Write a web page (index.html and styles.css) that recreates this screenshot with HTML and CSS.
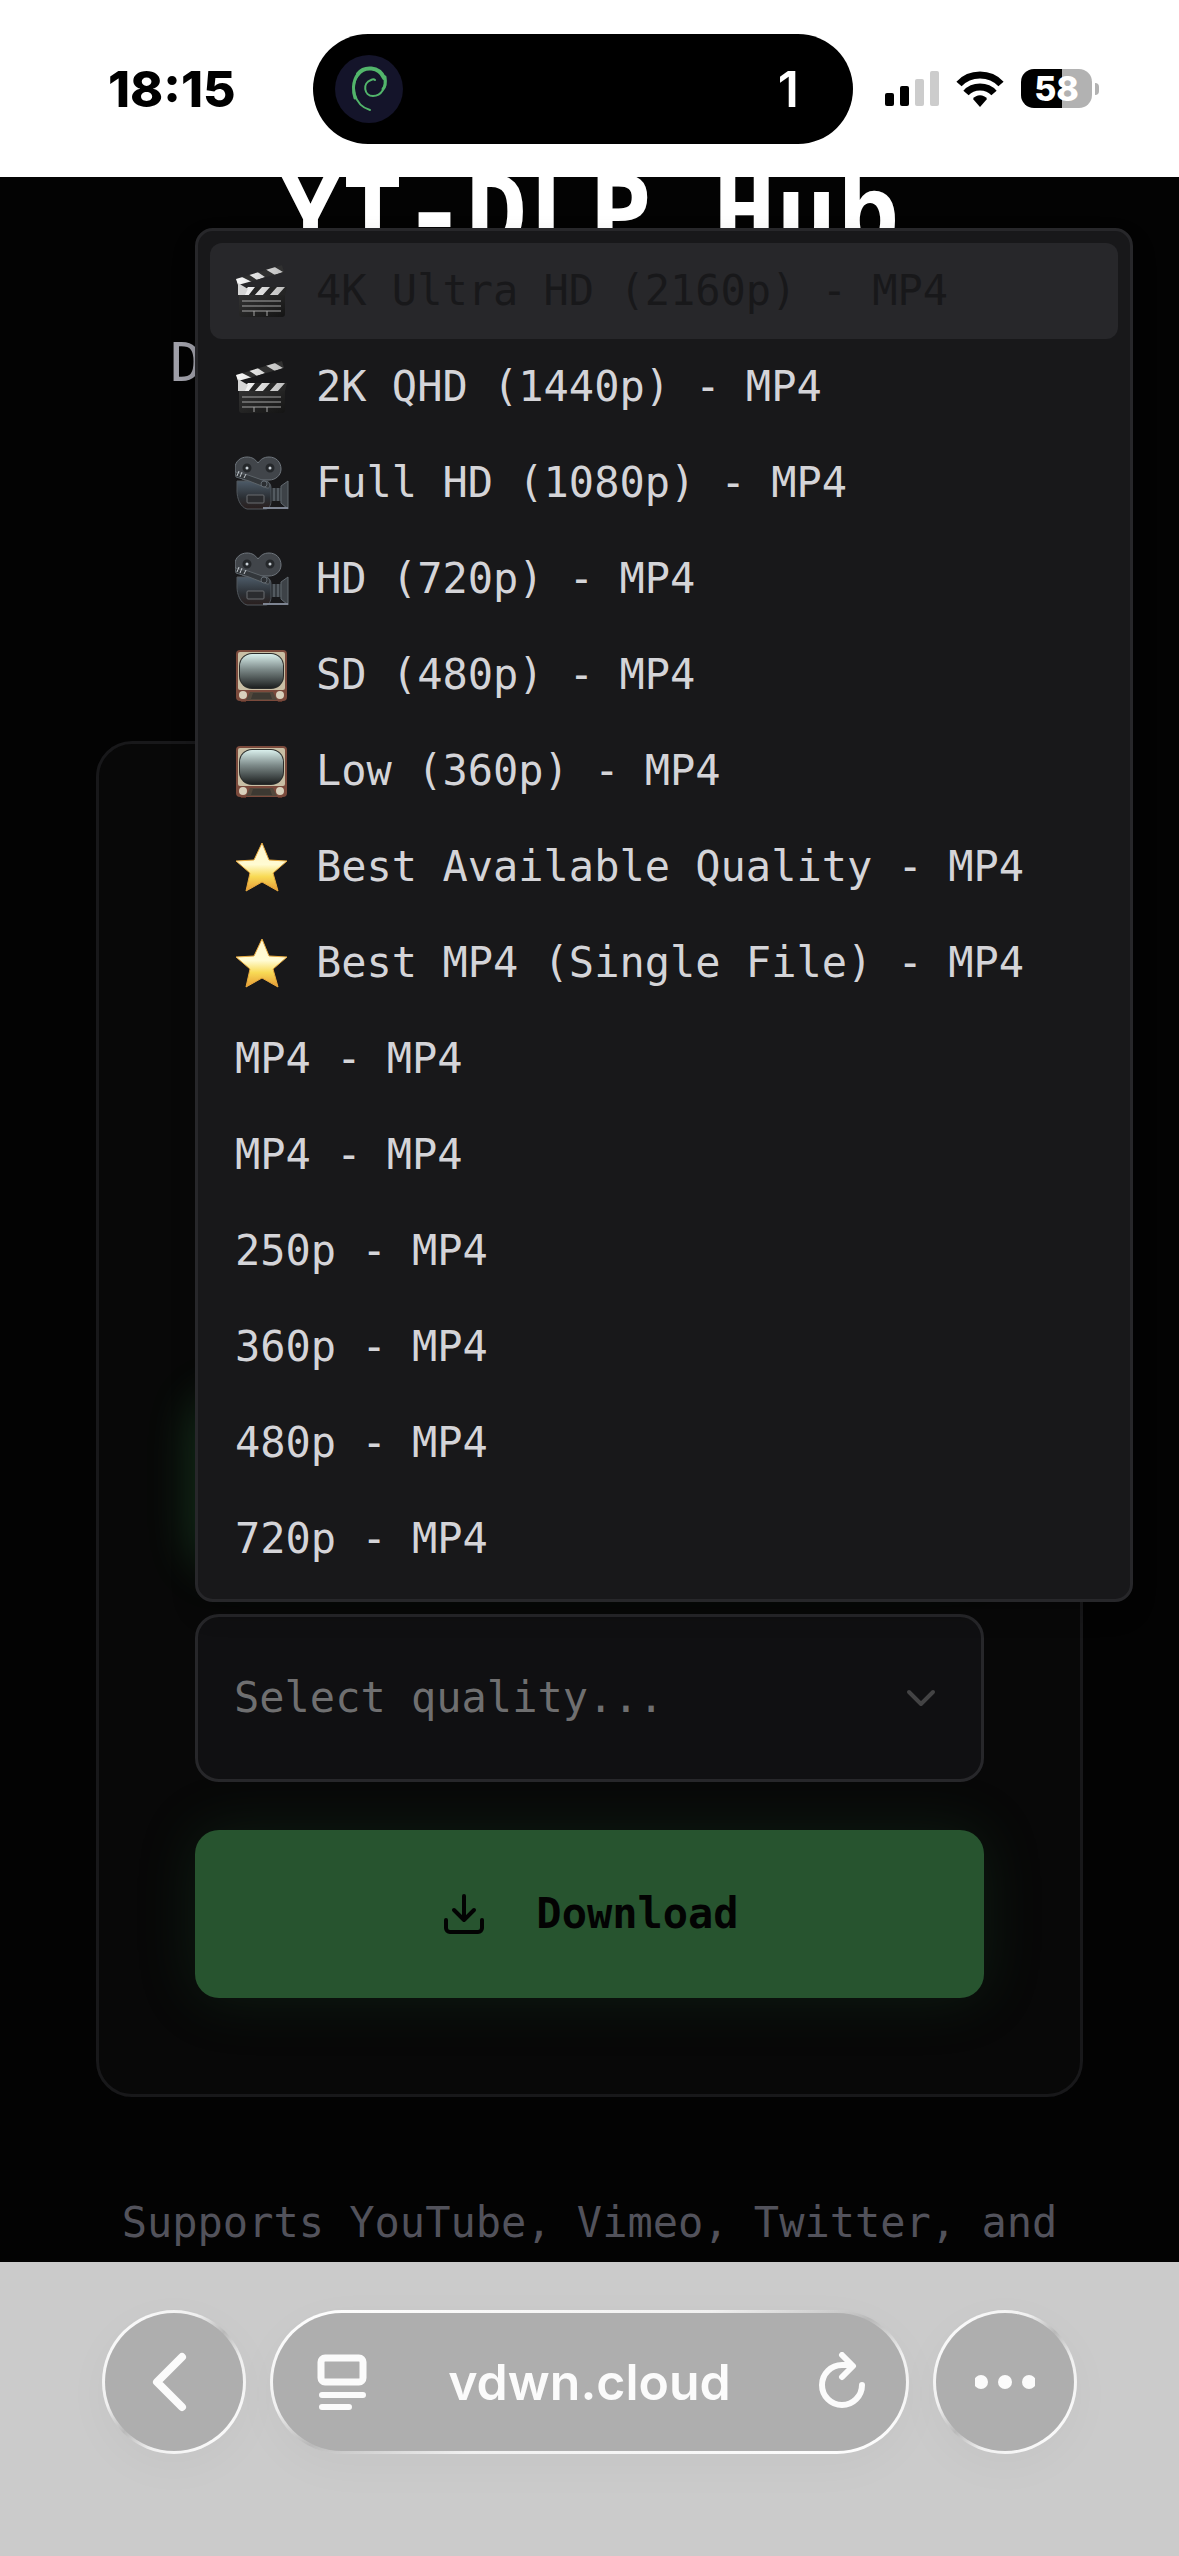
FILE: index.html
```html
<!DOCTYPE html>
<html lang="en">
<head>
<meta charset="utf-8">
<meta name="viewport" content="width=device-width, initial-scale=1">
<title>YT-DLP Hub</title>
<link rel="stylesheet" href="styles.css">
</head>
<body>
<svg class="sprite" aria-hidden="true">
  <defs>
    <linearGradient id="g-slate" x1="0" y1="0" x2="1" y2="0"><stop offset="0" stop-color="#fafafa"/><stop offset="1" stop-color="#bdbdbd"/></linearGradient>
    <linearGradient id="g-board" x1="0" y1="0" x2="1" y2="1"><stop offset="0" stop-color="#343434"/><stop offset="1" stop-color="#141414"/></linearGradient>
    <linearGradient id="g-camera" x1="0" y1="0" x2="0" y2="1"><stop offset="0" stop-color="#4d5b68"/><stop offset=".6" stop-color="#2b2f34"/><stop offset="1" stop-color="#2a1f1e"/></linearGradient>
    <linearGradient id="g-screen" x1="0" y1="0" x2="0" y2="1"><stop offset="0" stop-color="#d9efec"/><stop offset=".45" stop-color="#7d8a89"/><stop offset="1" stop-color="#1d2020"/></linearGradient>
    <linearGradient id="g-star" x1="0" y1="0" x2="0" y2="1"><stop offset="0" stop-color="#fff6cf"/><stop offset=".45" stop-color="#fffbd2"/><stop offset=".7" stop-color="#f8da55"/><stop offset="1" stop-color="#e79b35"/></linearGradient>
    <clipPath id="c-arm"><path d="M1 16 47 2l2 7L3 22z"/></clipPath>
    <clipPath id="c-bar"><path d="M4 24h48l-2 8H4z"/></clipPath>
  </defs>
  <symbol id="clapper" viewBox="0 0 56 56">
    <path d="M1 16 47 2l2 7L3 22z" fill="#303030"/>
    <path clip-path="url(#c-arm)" d="M0 15l5-2 12 6-14 5zM13 11l8-3 9 6-8 3zM30 6l8-3 10 6-8 3z" fill="url(#g-slate)"/>
    <rect x="4" y="30" width="46" height="24" rx="3" fill="url(#g-board)"/>
    <path d="M4 24h48l-2 8H4z" fill="#252525"/>
    <path clip-path="url(#c-bar)" d="M5 33l8-9h7l-7 9zM19 33l8-9h8l-8 9zM34 33l8-9h8l-8 9z" fill="url(#g-slate)"/>
    <path d="M3 20l10 6-3 6H3z" fill="#d5d5d5"/>
    <path d="M7 38h39M7 43h39M7 48h39M19 48v5M32 48v5" stroke="#a4a4a4" stroke-width="1" fill="none"/>
  </symbol>
  <symbol id="camera" viewBox="0 0 56 56">
    <path d="M12 2c5 0 8 2 11 6 3-4 6-6 11-6 7 0 12 5 12 12 0 6-5 11-12 11H10C4 23 0 19 0 13 0 7 5 2 12 2z" fill="#41454a" stroke="#6f767d"/>
    <g fill="#c9d0d6" stroke="#25282b" stroke-width="3"><circle cx="12" cy="13" r="3"/><circle cx="35" cy="13" r="3"/></g>
    <path d="M2 26h30c3 2 4 4 4 7v13c0 4-2 8-5 8H12C5 52 2 43 2 36z" fill="url(#g-camera)" stroke="#50565c"/>
    <path d="M36 33h10v13H36z" fill="#353a3f"/><path d="M39 33v13M43 33v13" stroke="#727a82"/>
    <path d="M46 31l7-5v28l-7-6z" fill="#3d4247" stroke="#61686f"/>
    <path d="M28 53h25" stroke="#7d8492" stroke-width="2"/>
    <path d="M0 17l13 3 20 7c3 2 2 7-1 6L14 26 1 22z" fill="#33373b" stroke="#5d646a"/>
    <path d="M2 21l2-5M5 22l2-5M9 23l2-4" stroke="#c2c8cd"/>
    <circle cx="29" cy="29" r="3" fill="#2b2e32" stroke="#626a71"/>
    <rect x="12" y="40" width="17" height="8" rx="1" fill="#2b2c2f" stroke="#6a6d71"/>
  </symbol>
  <symbol id="tv" viewBox="0 0 56 56">
    <path d="M5 52h6v3H6zM42 52h6l-1 3h-4z" fill="#5a342a"/>
    <rect x="1" y="3" width="51" height="51" rx="4" fill="#7b4a3c"/>
    <rect x="3" y="5" width="47" height="38" rx="2" fill="#c9bfa5"/>
    <rect x="4" y="6" width="45" height="36" rx="13" fill="#2a2c2b"/>
    <rect x="5" y="7" width="43" height="34" rx="12" fill="url(#g-screen)"/>
    <path d="M15 45h23l4 8H11z" fill="#53483c"/><path d="M18 46h17l2 6H16z" fill="#3d3932"/>
    <circle cx="8" cy="48" r="4" fill="#d8d1bd"/><circle cx="45" cy="48" r="4" fill="#d8d1bd"/>
  </symbol>
  <symbol id="star" viewBox="0 0 56 56">
    <path d="M27 4l7 17 18 1-14 12 5 18-16-9-16 9 4-18L1 22l18-1z" fill="url(#g-star)" stroke="#e9ab3f" stroke-width="1" stroke-linejoin="round"/>
  </symbol>
</svg>

<header class="status">
  <time class="clock">18:15</time>
  <div class="island">
    <svg class="swirl" viewBox="0 0 68 68" aria-hidden="true">
      <circle cx="34" cy="34" r="34" fill="#14142a"/>
      <g fill="none" stroke="#52b56b" stroke-linecap="round">
        <path d="M49 23C44 11 29 11 23 19" stroke-width="4"/>
        <path d="M24 19C15 29 18 50 35 55" stroke-width="2"/>
        <path d="M23 19c-6 8-5 18-3 24" stroke-width="3"/>
        <path d="M49 21c3 12-3 20-11 20-9 0-11-13-2-16 2-1 3-1 4 0" stroke-width="2"/>
        <path d="M50 22c1 6 0 10-2 12" stroke-width="3"/>
      </g>
    </svg>
    <span class="count">1</span>
  </div>
  <div class="indicators">
    <svg class="signal" viewBox="0 0 54 35" role="img" aria-label="Signal">
      <rect x="0" y="22" width="9" height="13" rx="2"/><rect x="15" y="15" width="9" height="20" rx="2"/>
      <rect x="30" y="8" width="9" height="27" rx="2" fill="#ccc"/><rect x="45" y="0" width="9" height="35" rx="2" fill="#ccc"/>
    </svg>
    <svg class="wifi" viewBox="0 0 48 36" role="img" aria-label="Wi-Fi">
      <path d="M24 36l-7-8c3-5 11-5 14 0z"/>
      <g fill="none" stroke="#000" stroke-width="7"><path d="M3 13c11-12 31-12 42 0"/><path d="M10 22c7-8 21-8 28 0"/></g>
    </svg>
    <div class="battery"><span class="level">58</span><span class="nub"></span></div>
  </div>
</header>

<main class="page">
  <h1 class="title">YT-DLP Hub</h1>
  <p class="tagline">D</p>
  <form class="card">
    <button class="action fetch" type="button" aria-label="Fetch"></button>
    <div class="picker">
      <label class="field">
        <select class="quality" aria-label="Quality"><option>Select quality...</option></select>
        <svg class="caret" viewBox="0 0 48 48" aria-hidden="true"><path d="M12 18l12 12 12-12"/></svg>
      </label>
      <div class="menu" role="listbox" aria-label="Quality options">
        <button class="option active" type="button" role="option" aria-selected="true"><svg class="emoji"><use href="#clapper"/></svg>4K Ultra HD (2160p) - MP4</button>
        <button class="option" type="button" role="option"><svg class="emoji"><use href="#clapper"/></svg>2K QHD (1440p) - MP4</button>
        <button class="option" type="button" role="option"><svg class="emoji"><use href="#camera"/></svg>Full HD (1080p) - MP4</button>
        <button class="option" type="button" role="option"><svg class="emoji"><use href="#camera"/></svg>HD (720p) - MP4</button>
        <button class="option" type="button" role="option"><svg class="emoji"><use href="#tv"/></svg>SD (480p) - MP4</button>
        <button class="option" type="button" role="option"><svg class="emoji"><use href="#tv"/></svg>Low (360p) - MP4</button>
        <button class="option" type="button" role="option"><svg class="emoji"><use href="#star"/></svg>Best Available Quality - MP4</button>
        <button class="option" type="button" role="option"><svg class="emoji"><use href="#star"/></svg>Best MP4 (Single File) - MP4</button>
        <button class="option" type="button" role="option">MP4 - MP4</button>
        <button class="option" type="button" role="option">MP4 - MP4</button>
        <button class="option" type="button" role="option">250p - MP4</button>
        <button class="option" type="button" role="option">360p - MP4</button>
        <button class="option" type="button" role="option">480p - MP4</button>
        <button class="option" type="button" role="option">720p - MP4</button>
      </div>
    </div>
    <button class="action download" type="submit">
      <svg class="glyph" viewBox="0 0 24 24" aria-hidden="true"><path d="M12 3v12M7 10l5 5 5-5M21 15v4a2 2 0 0 1-2 2H5a2 2 0 0 1-2-2v-4"/></svg>
      Download
    </button>
  </form>
  <p class="supports">Supports YouTube, Vimeo, Twitter, and</p>
</main>

<nav class="toolbar" aria-label="Browser">
  <button class="glass round" type="button" aria-label="Back">
    <svg class="tool" viewBox="0 0 60 60" aria-hidden="true"><path d="M38 5 13 30l25 25" stroke-width="8"/></svg>
  </button>
  <div class="glass address">
    <button class="plain" type="button" aria-label="Page menu">
      <svg class="tool" viewBox="0 0 60 60" aria-hidden="true"><rect x="9" y="6" width="42" height="24" rx="4" stroke-width="7"/><path d="M10 43h41M10 55h27" stroke-width="6"/></svg>
    </button>
    <a class="url" href="#">vdwn.cloud</a>
    <button class="plain" type="button" aria-label="Reload">
      <svg class="tool" viewBox="0 0 60 60" aria-hidden="true"><path d="M35 13a20 20 0 1 0 20 20M35 3l11 11-11 11M35 13h9" stroke-width="6"/></svg>
    </button>
  </div>
  <button class="glass round" type="button" aria-label="More">
    <svg class="dots" viewBox="0 0 60 14" aria-hidden="true"><circle cx="6" cy="7" r="7"/><circle cx="30" cy="7" r="7"/><circle cx="54" cy="7" r="7"/></svg>
  </button>
</nav>
</body>
</html>
```
FILE: styles.css
```css
* { box-sizing: border-box; }

body {
  margin: 0;
  min-height: 100vh;
  display: flex;
  flex-direction: column;
  background: #030303;
  font-family: "DejaVu Sans Mono", monospace;
  font-size: 42px;
  line-height: 60px;
}

h1, p { margin: 0; }

button, select {
  font: inherit;
  border: 0;
  padding: 0;
  background: none;
}

.sprite { position: absolute; width: 0; height: 0; }

/* Status bar */
.status {
  display: grid;
  grid-template-columns: 313fr 540fr 326fr;
  align-items: center;
  height: 177px;
  background: #fff;
  color: #000;
  font-family: Inter, sans-serif;
  font-size: 50px;
  position: relative;
  z-index: 1;
}
.clock { padding-left: 108px; font-weight: 800; }
.island {
  display: flex;
  align-items: center;
  justify-content: space-between;
  height: 110px;
  padding: 0 54px 0 22px;
  border-radius: 55px;
  background: #000;
  color: #fff;
}
.swirl { width: 68px; height: 68px; }
.count { font-weight: 600; }
.indicators { display: flex; align-items: center; gap: 17px; padding-left: 32px; }
.signal { width: 54px; height: 35px; }
.wifi { width: 48px; height: 36px; }
.battery { display: flex; align-items: center; gap: 3px; }
.level {
  width: 71px;
  border-radius: 13px;
  background: linear-gradient(90deg, #000 41px, #b2b2b2 41px);
  color: #fff;
  font-size: 34px;
  font-weight: 800;
  line-height: 39px;
  text-align: center;
}
.nub { width: 4px; height: 12px; border-radius: 0 6px 6px 0; background: #b2b2b2; }

/* Page */
.page {
  flex: 1;
  display: flex;
  flex-direction: column;
  padding: 0 96px;
  overflow: hidden;
}
.title {
  margin-top: -24px;
  color: #fff;
  font-size: 103px;
  font-weight: 700;
  line-height: 120px;
  text-align: center;
}
.tagline {
  margin-top: 48px;
  padding-left: 74px;
  color: #a1a1aa;
  font-size: 54px;
  line-height: 84px;
}
.card {
  display: flex;
  flex-direction: column;
  justify-content: flex-end;
  gap: 48px;
  min-height: 1356px;
  margin-top: 336px;
  padding: 96px;
  border: 3px solid #18181a;
  border-radius: 36px;
  background: #080808;
}
.action {
  display: flex;
  align-items: center;
  justify-content: center;
  gap: 48px;
  height: 168px;
  border-radius: 24px;
  background: #27542f;
  color: #030303;
  font-weight: 700;
}
.fetch { box-shadow: 0 0 48px rgba(74, 222, 110, 0.24); }
.download { box-shadow: 0 0 60px rgba(39, 110, 60, 0.2); }
.glyph {
  width: 48px;
  height: 48px;
  fill: none;
  stroke: currentColor;
  stroke-width: 2;
  stroke-linecap: round;
  stroke-linejoin: round;
}

.picker { position: relative; }
.field {
  display: flex;
  align-items: center;
  height: 168px;
  padding: 0 36px;
  border: 3px solid #27272a;
  border-radius: 24px;
  background: #101012;
}
.quality { flex: 1; appearance: none; color: #6f6f70; outline: 0; }
.caret {
  width: 48px;
  height: 48px;
  fill: none;
  stroke: #434344;
  stroke-width: 4;
  stroke-linecap: round;
  stroke-linejoin: round;
}
.menu {
  position: absolute;
  left: 0;
  right: -149px;
  bottom: calc(100% + 12px);
  display: flex;
  flex-direction: column;
  padding: 12px;
  border: 3px solid #27272a;
  border-radius: 18px;
  background: #18181a;
  box-shadow: 0 12px 24px rgba(0, 0, 0, 0.2);
}
.option {
  display: flex;
  align-items: center;
  gap: 25px;
  height: 96px;
  padding: 0 25px;
  border-radius: 12px;
  color: #d4d4d8;
  text-align: left;
}
.option.active { background: #27272a; color: #18181a; }
.emoji { width: 56px; height: 56px; }

.supports { margin-top: 96px; color: #52525b; text-align: center; }

/* Browser toolbar */
.toolbar {
  display: flex;
  gap: 24px;
  height: 294px;
  padding: 48px 102px;
  background: #cbcbcb;
  position: relative;
}
.glass {
  display: flex;
  align-items: center;
  height: 144px;
  border: 3px solid transparent;
  border-radius: 72px;
  background:
    linear-gradient(#aeaeae, #aeaeae) padding-box,
    linear-gradient(to bottom right, #fff 0%, #f0f0f0 35%, #b9b9b9 50%, #f0f0f0 65%, #fff 100%) border-box;
  box-shadow: 0 12px 48px rgba(0, 0, 0, 0.03);
}
.round { width: 144px; justify-content: center; }
.address { flex: 1; justify-content: space-between; padding: 0 39px; }
.plain { display: flex; }
.tool {
  width: 60px;
  height: 60px;
  fill: none;
  stroke: #fbfbfb;
  stroke-linecap: round;
  stroke-linejoin: round;
}
.dots { width: 60px; height: 14px; fill: #fbfbfb; }
.url {
  color: #fbfbfb;
  font-family: Inter, sans-serif;
  font-size: 50px;
  font-weight: 600;
  text-decoration: none;
}
```
